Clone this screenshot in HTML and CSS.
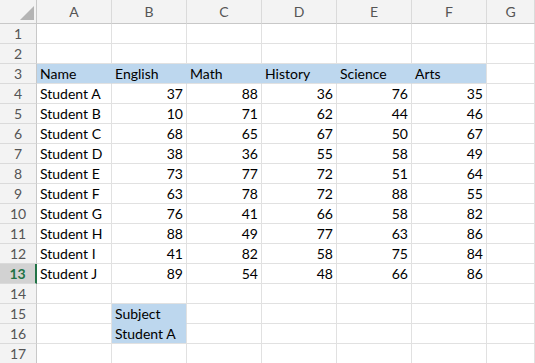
FILE: index.html
```html
<!DOCTYPE html>
<html lang="en">
<head>
    <meta charset="UTF-8" />
    <title>Scores</title>
    <link rel="stylesheet" href="styles.css">
</head>
<body>
    <div class="sheet">
        <div class="corner"><span class="tri"></span></div>
        <div class="colhead">A</div>
        <div class="colhead">B</div>
        <div class="colhead">C</div>
        <div class="colhead">D</div>
        <div class="colhead">E</div>
        <div class="colhead">F</div>
        <div class="colhead">G</div>

        <div class="rowhead">1</div>
        <div class="cell"></div><div class="cell"></div><div class="cell"></div><div class="cell"></div><div class="cell"></div><div class="cell"></div><div class="cell"></div>

        <div class="rowhead">2</div>
        <div class="cell"></div><div class="cell"></div><div class="cell"></div><div class="cell"></div><div class="cell"></div><div class="cell"></div><div class="cell"></div>

        <div class="rowhead">3</div>
        <div class="cell fill">Name</div>
        <div class="cell fill">English</div>
        <div class="cell fill">Math</div>
        <div class="cell fill">History</div>
        <div class="cell fill">Science</div>
        <div class="cell fill last">Arts</div>
        <div class="cell"></div>

        <div class="rowhead">4</div>
        <div class="cell">Student A</div><div class="cell num">37</div><div class="cell num">88</div><div class="cell num">36</div><div class="cell num">76</div><div class="cell num">35</div><div class="cell"></div>

        <div class="rowhead">5</div>
        <div class="cell">Student B</div><div class="cell num">10</div><div class="cell num">71</div><div class="cell num">62</div><div class="cell num">44</div><div class="cell num">46</div><div class="cell"></div>

        <div class="rowhead">6</div>
        <div class="cell">Student C</div><div class="cell num">68</div><div class="cell num">65</div><div class="cell num">67</div><div class="cell num">50</div><div class="cell num">67</div><div class="cell"></div>

        <div class="rowhead">7</div>
        <div class="cell">Student D</div><div class="cell num">38</div><div class="cell num">36</div><div class="cell num">55</div><div class="cell num">58</div><div class="cell num">49</div><div class="cell"></div>

        <div class="rowhead">8</div>
        <div class="cell">Student E</div><div class="cell num">73</div><div class="cell num">77</div><div class="cell num">72</div><div class="cell num">51</div><div class="cell num">64</div><div class="cell"></div>

        <div class="rowhead">9</div>
        <div class="cell">Student F</div><div class="cell num">63</div><div class="cell num">78</div><div class="cell num">72</div><div class="cell num">88</div><div class="cell num">55</div><div class="cell"></div>

        <div class="rowhead">10</div>
        <div class="cell">Student G</div><div class="cell num">76</div><div class="cell num">41</div><div class="cell num">66</div><div class="cell num">58</div><div class="cell num">82</div><div class="cell"></div>

        <div class="rowhead">11</div>
        <div class="cell">Student H</div><div class="cell num">88</div><div class="cell num">49</div><div class="cell num">77</div><div class="cell num">63</div><div class="cell num">86</div><div class="cell"></div>

        <div class="rowhead">12</div>
        <div class="cell">Student I</div><div class="cell num">41</div><div class="cell num">82</div><div class="cell num">58</div><div class="cell num">75</div><div class="cell num">84</div><div class="cell"></div>

        <div class="rowhead active">13</div>
        <div class="cell">Student J</div><div class="cell num">89</div><div class="cell num">54</div><div class="cell num">48</div><div class="cell num">66</div><div class="cell num">86</div><div class="cell"></div>

        <div class="rowhead">14</div>
        <div class="cell"></div><div class="cell"></div><div class="cell"></div><div class="cell"></div><div class="cell"></div><div class="cell"></div><div class="cell"></div>

        <div class="rowhead">15</div>
        <div class="cell"></div><div class="cell fill last mid">Subject</div><div class="cell"></div><div class="cell"></div><div class="cell"></div><div class="cell"></div><div class="cell"></div>

        <div class="rowhead">16</div>
        <div class="cell"></div><div class="cell fill last">Student A</div><div class="cell"></div><div class="cell"></div><div class="cell"></div><div class="cell"></div><div class="cell"></div>

        <div class="rowhead">17</div>
        <div class="cell"></div><div class="cell"></div><div class="cell"></div><div class="cell"></div><div class="cell"></div><div class="cell"></div><div class="cell"></div>
    </div>
</body>
</html>
```

FILE: styles.css
```css
body {
    margin: 0;
    background: #fff;
    font-family: "Lato", "Liberation Sans", sans-serif;
    font-size: 14px;
    color: #000;
}
.sheet {
    display: grid;
    grid-template-columns: 37px repeat(6, 75px) 1fr;
    grid-template-rows: 24px;
    grid-auto-rows: 20px;
    overflow: hidden;
}
.corner, .colhead, .rowhead {
    background: #f3f3f3;
    color: #555;
    box-sizing: border-box;
}
.corner {
    position: relative;
    border-right: 1px solid #c8c8c8;
    border-bottom: 1px solid #c8c8c8;
}
.tri {
    position: absolute;
    right: 2px;
    bottom: 3px;
    width: 0;
    height: 0;
    border-left: 14px solid transparent;
    border-bottom: 14px solid #b4b4b4;
}
.colhead {
    border-right: 1px solid #dadada;
    border-bottom: 1px solid #c8c8c8;
    text-align: center;
    line-height: 23px;
}
.rowhead {
    border-right: 1px solid #c8c8c8;
    border-bottom: 1px solid #dadada;
    text-align: center;
    line-height: 19px;
}
.rowhead.active {
    background: #d2d2d2;
    color: #217346;
    font-weight: bold;
    border-right: 2px solid #217346;
}
.cell {
    box-sizing: border-box;
    border-right: 1px solid #e1e1e1;
    border-bottom: 1px solid #e1e1e1;
    padding: 0 3px;
    line-height: 19px;
    white-space: nowrap;
    overflow: hidden;
}
.num {
    text-align: right;
}
.fill {
    background: #bdd7ee;
    border-right-color: #bdd7ee;
}
.fill.last {
    border-right-color: #e1e1e1;
}
.fill.mid {
    border-bottom-color: #bdd7ee;
}
```
